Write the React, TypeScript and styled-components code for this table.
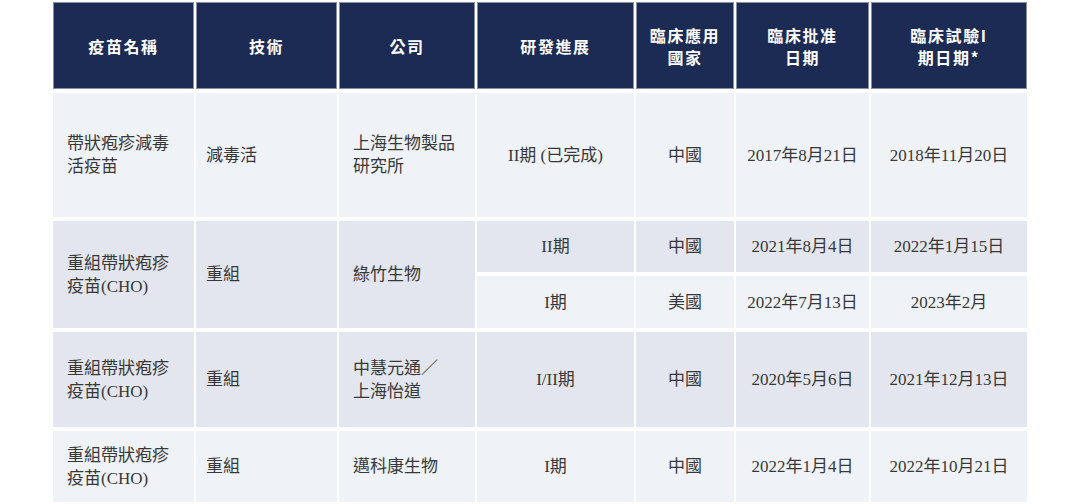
import React from 'react'
import styled, { createGlobalStyle } from 'styled-components'

const GlobalStyle = createGlobalStyle`
  html, body {
    margin: 0;
    padding: 0;
    background: #ffffff;
  }
`

const Page = styled.div`
  padding: 2px 0 0 53px;
  width: 1080px;
  height: 504px;
  box-sizing: border-box;
  overflow: hidden;
`

const Grid = styled.div`
  display: grid;
  grid-template-columns: 141px 141px 136px 157px 98px 133px 156px;
  grid-template-rows: 87px 124px 51px 52px 95px 71px;
  column-gap: 2px;
  row-gap: 4px;
`

const HeadCell = styled.div`
  background: #1c2b53;
  border: 1px solid #8790a5;
  box-sizing: border-box;
  color: #ffffff;
  display: flex;
  align-items: center;
  justify-content: center;
  text-align: center;
  font-family: 'Noto Sans CJK TC', 'Noto Sans', sans-serif;
  font-weight: 700;
  font-size: 16px;
  letter-spacing: 1.6px;
  line-height: 22px;
`

const Cell = styled.div<{ $dark?: boolean; $span?: number; $align?: 'left' | 'center'; $pad?: number }>`
  background: ${(p) => (p.$dark ? '#e3e6ee' : '#eff3f8')};
  grid-row: ${(p) => (p.$span ? `span ${p.$span}` : 'auto')};
  display: flex;
  align-items: center;
  justify-content: ${(p) => (p.$align === 'left' ? 'flex-start' : 'center')};
  text-align: ${(p) => (p.$align === 'left' ? 'left' : 'center')};
  padding: 0 ${(p) => (p.$align === 'left' ? 6 : 0)}px 0 ${(p) => p.$pad ?? 0}px;
  box-sizing: border-box;
  color: #383838;
  font-family: 'Liberation Serif', 'Noto Sans CJK TC', serif;
  font-size: 17px;
  line-height: 23px;
`

const headers = [
  ['疫苗名稱'],
  ['技術'],
  ['公司'],
  ['研發進展'],
  ['臨床應用', '國家'],
  ['臨床批准', '日期'],
  ['臨床試驗I', '期日期*'],
]

type Row = {
  name: string[]
  tech: string
  company: string[]
  dark: boolean
  stages: { stage: string; country: string; approved: string; trial: string; dark: boolean }[]
}

const rows: Row[] = [
  {
    name: ['帶狀疱疹減毒', '活疫苗'],
    tech: '減毒活',
    company: ['上海生物製品', '研究所'],
    dark: false,
    stages: [{ stage: 'II期 (已完成)', country: '中國', approved: '2017年8月21日', trial: '2018年11月20日', dark: false }],
  },
  {
    name: ['重組帶狀疱疹', '疫苗(CHO)'],
    tech: '重組',
    company: ['綠竹生物'],
    dark: true,
    stages: [
      { stage: 'II期', country: '中國', approved: '2021年8月4日', trial: '2022年1月15日', dark: true },
      { stage: 'I期', country: '美國', approved: '2022年7月13日', trial: '2023年2月', dark: false },
    ],
  },
  {
    name: ['重組帶狀疱疹', '疫苗(CHO)'],
    tech: '重組',
    company: ['中慧元通／', '上海怡道'],
    dark: true,
    stages: [{ stage: 'I/II期', country: '中國', approved: '2020年5月6日', trial: '2021年12月13日', dark: true }],
  },
  {
    name: ['重組帶狀疱疹', '疫苗(CHO)'],
    tech: '重組',
    company: ['邁科康生物'],
    dark: false,
    stages: [{ stage: 'I期', country: '中國', approved: '2022年1月4日', trial: '2022年10月21日', dark: false }],
  },
]

const Lines = ({ lines }: { lines: string[] }) => (
  <div>
    {lines.map((l, i) => (
      <div key={i}>{l}</div>
    ))}
  </div>
)

export default function App() {
  return (
    <>
      <GlobalStyle />
      <Page>
        <Grid>
          {headers.map((h, i) => (
            <HeadCell key={i}>
              <Lines lines={h} />
            </HeadCell>
          ))}
          {rows.map((r, i) => {
            const span = r.stages.length > 1 ? r.stages.length : undefined
            return (
              <React.Fragment key={i}>
                <Cell $dark={r.dark} $span={span} $align="left" $pad={14}>
                  <Lines lines={r.name} />
                </Cell>
                <Cell $dark={r.dark} $span={span} $align="left" $pad={10}>
                  {r.tech}
                </Cell>
                <Cell $dark={r.dark} $span={span} $align="left" $pad={14}>
                  <Lines lines={r.company} />
                </Cell>
                {r.stages.map((s, j) => (
                  <React.Fragment key={j}>
                    <Cell $dark={s.dark}>{s.stage}</Cell>
                    <Cell $dark={s.dark}>{s.country}</Cell>
                    <Cell $dark={s.dark}>{s.approved}</Cell>
                    <Cell $dark={s.dark}>{s.trial}</Cell>
                  </React.Fragment>
                ))}
              </React.Fragment>
            )
          })}
        </Grid>
      </Page>
    </>
  )
}
